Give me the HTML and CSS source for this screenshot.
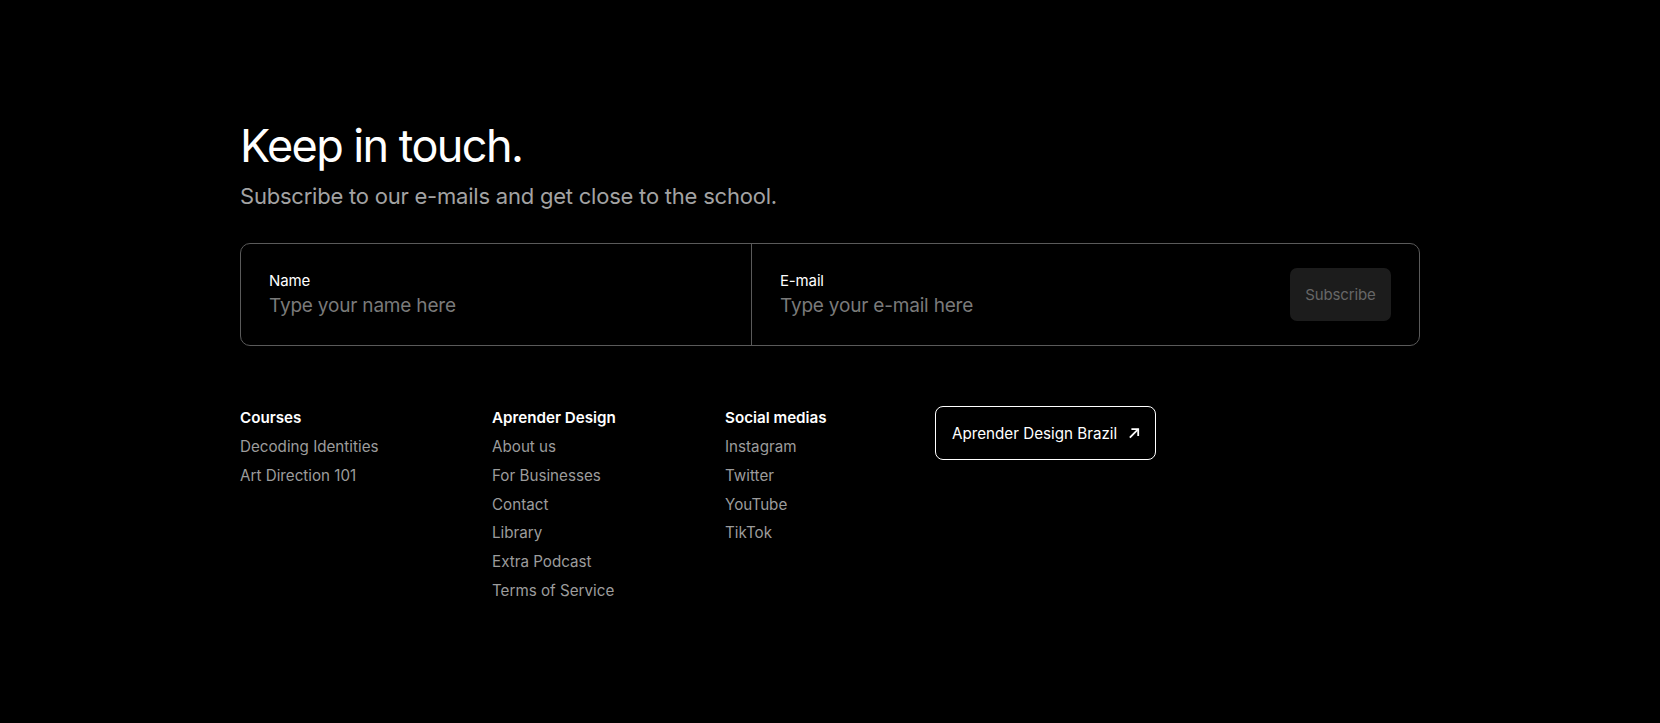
FILE: index.html
```html
<!DOCTYPE html>
<html lang="en">
<head>
    <meta charset="UTF-8">
    <meta name="viewport" content="width=device-width, initial-scale=1.0">
    <title>Keep in touch</title>
    <link rel="stylesheet" href="styles.css">
</head>
<body>
    <div id="container">

        <section class="newsletter">
            <h1>Keep in touch.</h1>
            <p class="lead">Subscribe to our e-mails and get close to the school.</p>

            <form class="signup" onsubmit="return false;">
                <label class="field">
                    <span class="fieldLabel">Name</span>
                    <input type="text" placeholder="Type your name here">
                </label>
                <div class="field fieldEmail">
                    <label class="fieldInner">
                        <span class="fieldLabel">E-mail</span>
                        <input type="email" placeholder="Type your e-mail here">
                    </label>
                    <button type="submit" class="subscribeBtn">Subscribe</button>
                </div>
            </form>
        </section>

        <footer class="siteLinks">
            <div class="linkColumn colCourses">
                <h4>Courses</h4>
                <a href="#">Decoding Identities</a>
                <a href="#">Art Direction 101</a>
            </div>
            <div class="linkColumn colSchool">
                <h4>Aprender Design</h4>
                <a href="#">About us</a>
                <a href="#">For Businesses</a>
                <a href="#">Contact</a>
                <a href="#">Library</a>
                <a href="#">Extra Podcast</a>
                <a href="#">Terms of Service</a>
            </div>
            <div class="linkColumn colSocial">
                <h4>Social medias</h4>
                <a href="#">Instagram</a>
                <a href="#">Twitter</a>
                <a href="#">YouTube</a>
                <a href="#">TikTok</a>
            </div>
            <div>
                <a href="#" class="brazilBtn">Aprender Design Brazil
                    <svg width="12" height="12" viewBox="0 0 12 12" fill="none" stroke="#fff" stroke-width="1.8">
                        <path d="M1.8 10.6 L10 2.4"/>
                        <path d="M3.4 2.1 H10.2 V8.9"/>
                    </svg>
                </a>
            </div>
        </footer>

    </div>
</body>
</html>
```

FILE: styles.css
```css
* {
    box-sizing: border-box;
}
body {
    margin: 0;
    background-color: #000;
    color: #fff;
    font-family: Inter, "Noto Sans", sans-serif;
}
#container {
    width: 1180px;
    margin-left: 240px;
    padding-top: 121px;
}

h1 {
    margin: 0;
    font-size: 45px;
    font-weight: 400;
    line-height: 1.1;
    letter-spacing: -0.035em;
}

.lead {
    margin: 11px 0 0 0;
    font-size: 22px;
    line-height: 1.3;
    color: #a3a3a3;
    letter-spacing: -0.01em;
}

.signup {
    display: flex;
    margin-top: 33px;
    height: 103px;
    border: 1px solid #5a5a5a;
    border-radius: 10px;
}

.field {
    display: flex;
    flex-direction: column;
    justify-content: center;
    padding: 1px 28px 0 28px;
    width: 511px;
    border-right: 1px solid #5a5a5a;
}

.fieldEmail {
    flex: 1;
    flex-direction: row;
    align-items: center;
    padding: 0 28px;
    border-right: none;
}

.fieldInner {
    flex: 1;
    display: flex;
    flex-direction: column;
    padding-top: 1px;
}

.fieldLabel {
    font-size: 15px;
    line-height: 20px;
    letter-spacing: -0.01em;
}

.field input {
    margin-top: 2px;
    padding: 0;
    border: none;
    outline: none;
    background: transparent;
    color: #fff;
    font-family: inherit;
    font-size: 19px;
    line-height: 26px;
    letter-spacing: -0.01em;
}

.field input::placeholder {
    color: #7a7a7a;
}

.subscribeBtn {
    width: 101px;
    height: 53px;
    border: none;
    border-radius: 7px;
    background-color: #1c1c1c;
    color: #676767;
    font-family: inherit;
    font-size: 15px;
    letter-spacing: -0.01em;
}

.siteLinks {
    display: flex;
    margin-top: 62px;
}

.colCourses {
    width: 252px;
}
.colSchool {
    width: 233px;
}
.colSocial {
    width: 210px;
}

.linkColumn h4 {
    margin: 0 0 5px 0;
    font-size: 15.2px;
    font-weight: 600;
    line-height: 20px;
}

.linkColumn a {
    display: block;
    color: #9c9c9c;
    text-decoration: none;
    font-size: 15.2px;
    line-height: 28.8px;
}

.brazilBtn {
    display: inline-flex;
    align-items: center;
    gap: 11px;
    height: 54px;
    margin-top: -2px;
    padding: 0 15px 0 16px;
    border: 1px solid #fff;
    border-radius: 8px;
    color: #fff;
    text-decoration: none;
    font-size: 15.2px;
}
```
